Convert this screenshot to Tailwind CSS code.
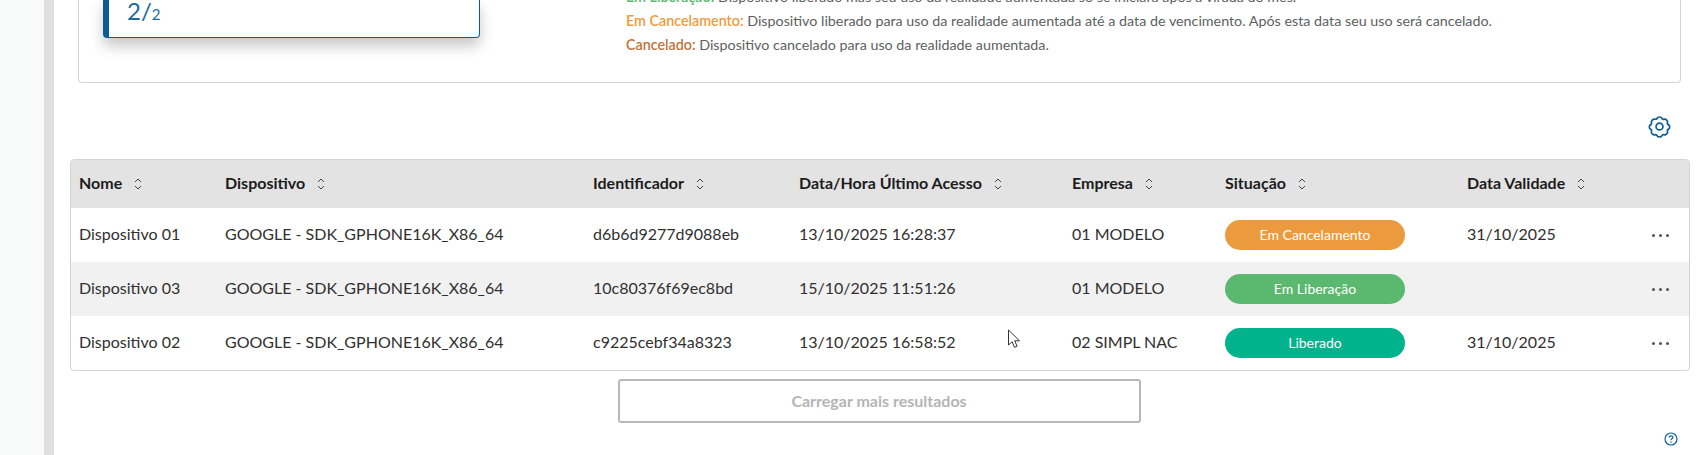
<!DOCTYPE html>
<html lang="pt-BR">
<head>
    <meta charset="UTF-8">
    <title>Dispositivos</title>
    <script src="https://cdn.jsdelivr.net/npm/@tailwindcss/browser@4"></script>
</head>
<body class="h-[455px] overflow-hidden bg-white font-['Lato',sans-serif] text-[16px] text-[#303030]">
    <div class="relative flex h-[455px]">
        <!-- menu lateral -->
        <div class="w-[44px] shrink-0 bg-[#f9fafa]"></div>
        <div class="w-[10px] shrink-0 bg-[#e0e0e0]"></div>

        <main class="flex-1 pl-[16px] pr-[12px]">
            <!-- quadro de resumo -->
            <section class="ml-[8px] mr-[9px] flex h-[83px] rounded-b-[4px] border border-t-0 border-[#d4d4d4]">
                <div class="ml-[24px] flex h-[38px] w-[377px] items-end rounded-b-[4px] border border-t-0 border-l-[6px] border-[#0c5b94] pb-[11px] pl-[18px] text-[#1a6aa0] shadow-[0_8px_14px_rgba(0,0,0,0.22)]">
                    <span class="text-[24px] leading-[24px]">2/<small class="text-[15px]">2</small></span>
                </div>
                <div class="-mt-[15px] ml-[146px] text-[14.3px] leading-[24px] text-[#5c5f62]">
                    <p><b class="font-semibold text-[#5bb96f]">Em Liberação:</b> Dispositivo liberado mas seu uso da realidade aumentada só se iniciará após a virada do mês.</p>
                    <p><b class="font-semibold text-[#ee9c3e]">Em Cancelamento:</b> Dispositivo liberado para uso da realidade aumentada até a data de vencimento. Após esta data seu uso será cancelado.</p>
                    <p><b class="font-semibold text-[#c0733c]">Cancelado:</b> Dispositivo cancelado para uso da realidade aumentada.</p>
                </div>
            </section>

            <div class="flex h-[76px] items-center justify-end pr-[19px] pt-[10px]">
                <svg class="h-[23px] w-[23px]" viewBox="0 0 24 24" fill="none" stroke="#0c6199" stroke-width="1.8" stroke-linejoin="round">
                    <path d="M9.6 3.2c.6-1.5 4.2-1.5 4.8 0 .4 1 1.6 1.5 2.6 1.1 1.5-.6 4 2 3.4 3.4-.4 1 .1 2.2 1.1 2.6 1.5.6 1.5 3.8 0 4.4-1 .4-1.5 1.6-1.1 2.6.6 1.5-1.9 4-3.4 3.4-1-.4-2.2.1-2.6 1.1-.6 1.5-4.2 1.5-4.8 0-.4-1-1.6-1.5-2.6-1.1-1.5.6-4-1.9-3.4-3.4.4-1-.1-2.2-1.1-2.6-1.5-.6-1.5-3.8 0-4.4 1-.4 1.5-1.6 1.1-2.6-.6-1.4 1.9-4 3.4-3.4 1 .4 2.2-.1 2.6-1.1z"/>
                    <circle cx="12" cy="12" r="3.6"/>
                </svg>
            </div>

            <!-- tabela de dispositivos -->
            <div class="overflow-hidden rounded-[4px] border border-[#d4d4d4]">
                <table class="w-full table-fixed text-left">
                    <colgroup>
                        <col class="w-[146px]"><col class="w-[368px]"><col class="w-[206px]"><col class="w-[273px]"><col class="w-[153px]"><col class="w-[242px]"><col class="w-[170px]"><col>
                    </colgroup>
                    <thead class="bg-[#e3e3e3] text-[#1c1c1c]">
                        <tr class="h-[48px]">
                            <th class="px-2 pb-[2px] font-bold">Nome<svg class="ml-[12px] inline h-[12px] w-[8px] align-[-1px]" viewBox="0 0 8 12" fill="none" stroke="#444" stroke-width="1"><path d="M1 4l3-3 3 3M1 8l3 3 3-3"/></svg></th>
                            <th class="px-2 pb-[2px] font-bold">Dispositivo<svg class="ml-[12px] inline h-[12px] w-[8px] align-[-1px]" viewBox="0 0 8 12" fill="none" stroke="#444" stroke-width="1"><path d="M1 4l3-3 3 3M1 8l3 3 3-3"/></svg></th>
                            <th class="px-2 pb-[2px] font-bold">Identificador<svg class="ml-[12px] inline h-[12px] w-[8px] align-[-1px]" viewBox="0 0 8 12" fill="none" stroke="#444" stroke-width="1"><path d="M1 4l3-3 3 3M1 8l3 3 3-3"/></svg></th>
                            <th class="px-2 pb-[2px] font-bold">Data/Hora Último Acesso<svg class="ml-[12px] inline h-[12px] w-[8px] align-[-1px]" viewBox="0 0 8 12" fill="none" stroke="#444" stroke-width="1"><path d="M1 4l3-3 3 3M1 8l3 3 3-3"/></svg></th>
                            <th class="px-2 pb-[2px] font-bold">Empresa<svg class="ml-[12px] inline h-[12px] w-[8px] align-[-1px]" viewBox="0 0 8 12" fill="none" stroke="#444" stroke-width="1"><path d="M1 4l3-3 3 3M1 8l3 3 3-3"/></svg></th>
                            <th class="px-2 pb-[2px] font-bold">Situação<svg class="ml-[12px] inline h-[12px] w-[8px] align-[-1px]" viewBox="0 0 8 12" fill="none" stroke="#444" stroke-width="1"><path d="M1 4l3-3 3 3M1 8l3 3 3-3"/></svg></th>
                            <th class="px-2 pb-[2px] font-bold">Data Validade<svg class="ml-[12px] inline h-[12px] w-[8px] align-[-1px]" viewBox="0 0 8 12" fill="none" stroke="#444" stroke-width="1"><path d="M1 4l3-3 3 3M1 8l3 3 3-3"/></svg></th>
                            <th></th>
                        </tr>
                    </thead>
                    <tbody>
                        <tr class="h-[54px]">
                            <td class="px-2 pb-[2px]">Dispositivo 01</td>
                            <td class="px-2 pb-[2px]">GOOGLE - SDK_GPHONE16K_X86_64</td>
                            <td class="px-2 pb-[2px]">d6b6d9277d9088eb</td>
                            <td class="px-2 pb-[2px]">13/10/2025 16:28:37</td>
                            <td class="px-2 pb-[2px]">01 MODELO</td>
                            <td class="px-2"><span class="flex h-[30px] w-[180px] items-center justify-center rounded-full bg-[#eb9b3e] pb-[2px] text-[14px] text-white">Em Cancelamento</span></td>
                            <td class="px-2 pb-[2px]">31/10/2025</td>
                            <td class="pl-[23px]"><span class="flex gap-[4px]"><i class="h-[3px] w-[3px] rounded-full bg-[#555]"></i><i class="h-[3px] w-[3px] rounded-full bg-[#555]"></i><i class="h-[3px] w-[3px] rounded-full bg-[#555]"></i></span></td>
                        </tr>
                        <tr class="h-[54px] bg-[#f1f1f1]">
                            <td class="px-2 pb-[2px]">Dispositivo 03</td>
                            <td class="px-2 pb-[2px]">GOOGLE - SDK_GPHONE16K_X86_64</td>
                            <td class="px-2 pb-[2px]">10c80376f69ec8bd</td>
                            <td class="px-2 pb-[2px]">15/10/2025 11:51:26</td>
                            <td class="px-2 pb-[2px]">01 MODELO</td>
                            <td class="px-2"><span class="flex h-[30px] w-[180px] items-center justify-center rounded-full bg-[#5bb96f] pb-[2px] text-[14px] text-white">Em Liberação</span></td>
                            <td class="px-2"></td>
                            <td class="pl-[23px]"><span class="flex gap-[4px]"><i class="h-[3px] w-[3px] rounded-full bg-[#555]"></i><i class="h-[3px] w-[3px] rounded-full bg-[#555]"></i><i class="h-[3px] w-[3px] rounded-full bg-[#555]"></i></span></td>
                        </tr>
                        <tr class="h-[54px]">
                            <td class="px-2 pb-[2px]">Dispositivo 02</td>
                            <td class="px-2 pb-[2px]">GOOGLE - SDK_GPHONE16K_X86_64</td>
                            <td class="px-2 pb-[2px]">c9225cebf34a8323</td>
                            <td class="px-2 pb-[2px]">13/10/2025 16:58:52</td>
                            <td class="px-2 pb-[2px]">02 SIMPL NAC</td>
                            <td class="px-2"><span class="flex h-[30px] w-[180px] items-center justify-center rounded-full bg-[#00b38c] pb-[2px] text-[14px] text-white">Liberado</span></td>
                            <td class="px-2 pb-[2px]">31/10/2025</td>
                            <td class="pl-[23px]"><span class="flex gap-[4px]"><i class="h-[3px] w-[3px] rounded-full bg-[#555]"></i><i class="h-[3px] w-[3px] rounded-full bg-[#555]"></i><i class="h-[3px] w-[3px] rounded-full bg-[#555]"></i></span></td>
                        </tr>
                    </tbody>
                </table>
            </div>

            <div class="mt-[8px] flex justify-center pr-[2px]">
                <button class="h-[44px] w-[523px] rounded-[3px] border-2 border-[#b8b8b8] text-[16px] font-bold text-[#b5b5b5]">Carregar mais resultados</button>
            </div>
        </main>

        <!-- ajuda -->
        <svg class="absolute left-[1664px] top-[432px] h-[14px] w-[14px]" viewBox="0 0 14 14" fill="none" stroke="#0c6199" stroke-width="1.2">
            <circle cx="7" cy="7" r="6"/>
            <path d="M5.2 5.5c0-2.3 3.6-2.3 3.6 0 0 1.4-1.8 1.3-1.8 2.8M7 9.6v1.2"/>
        </svg>

        <!-- ponteiro do mouse -->
        <svg class="absolute left-[1007px] top-[329px] h-[21px] w-[14px]" viewBox="0 0 14 21" fill="#fff" stroke="#333" stroke-width="1">
            <path d="M1.5 1v15l3.6-3.2 2.4 5.5 2.6-1.1-2.4-5.4h4.8z"/>
        </svg>
    </div>
</body>
</html>
